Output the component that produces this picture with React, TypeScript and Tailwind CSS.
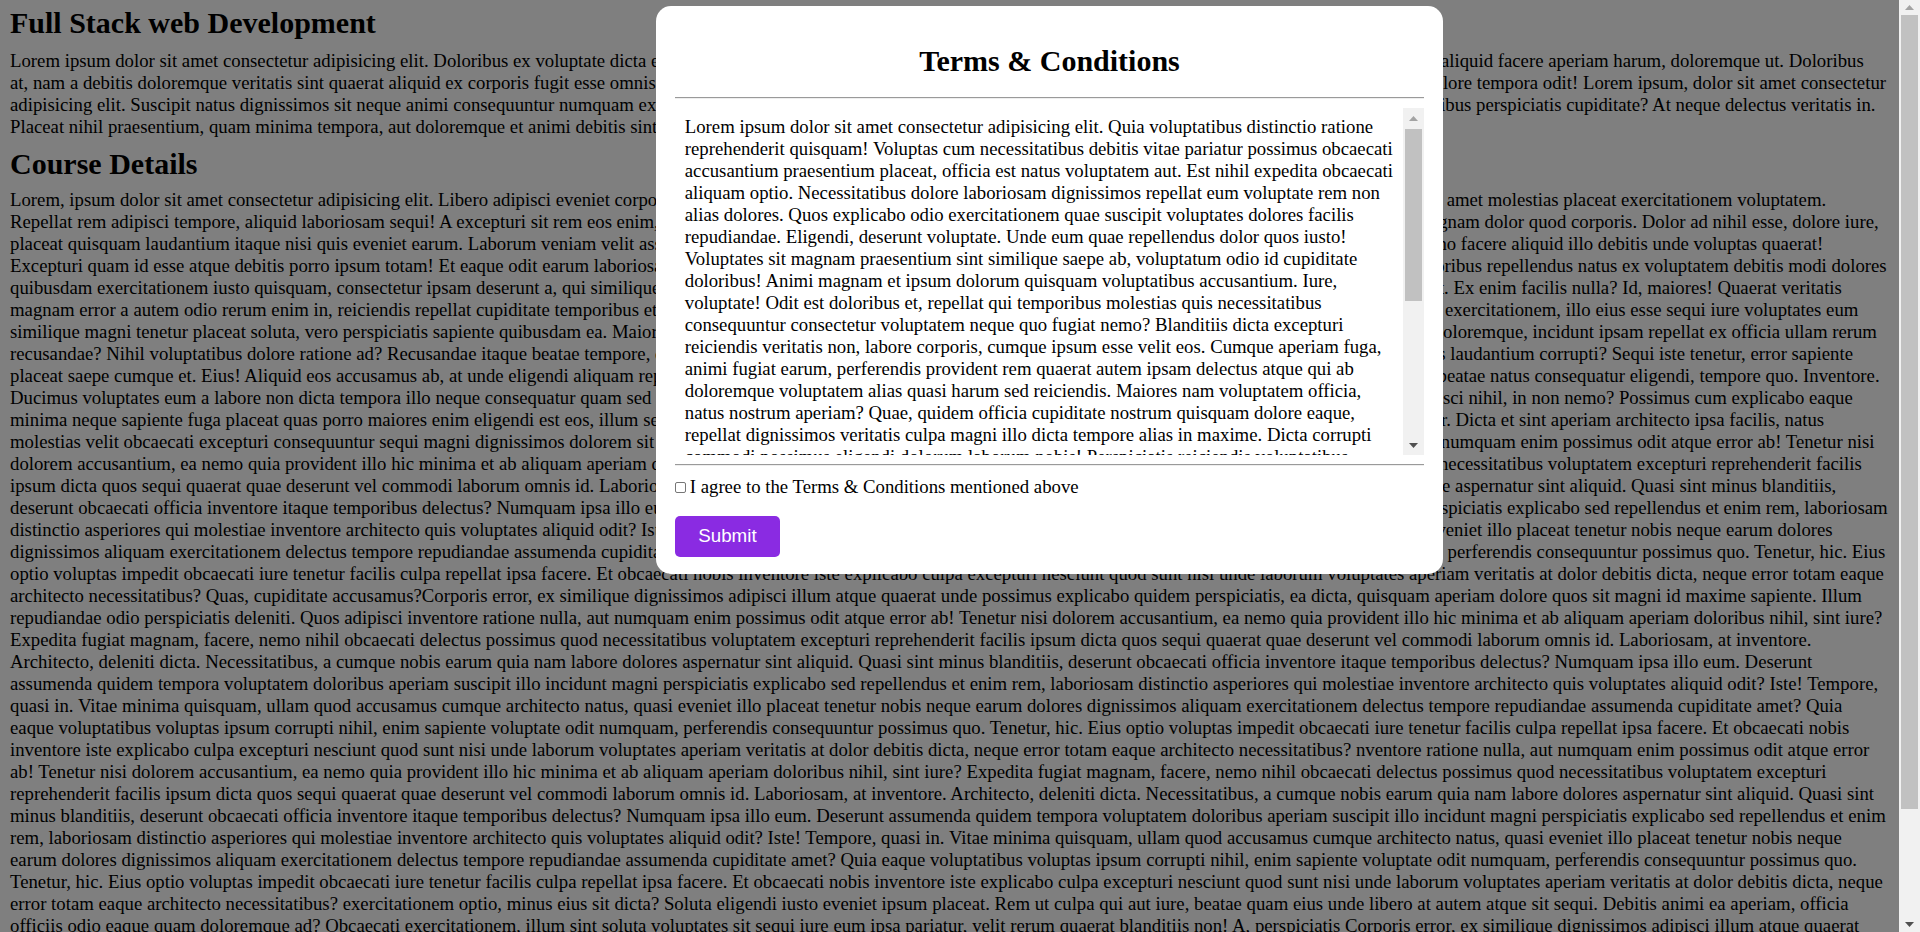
import React from "react";

const introLines = [
  "Lorem ipsum dolor sit amet consectetur adipisicing elit. Doloribus ex voluptate dicta eius quidem tempora dolore nihil sequi officia maxime labore beatae autem atque saepe earum eius error aliquid facere aperiam harum, doloremque ut. Doloribus",
  "at, nam a debitis doloremque veritatis sint quaerat aliquid ex corporis fugit esse omnis quidem minus magnam rerum totam omnis harum error natus earum saepe atque autem beatae labore dolore tempora odit! Lorem ipsum, dolor sit amet consectetur",
  "adipisicing elit. Suscipit natus dignissimos sit neque animi consequuntur numquam ex quo sunt esse nemo quia quas amet sit dolor ipsum lorem tempora dolore nihil sequi officia autem doloribus perspiciatis cupiditate? At neque delectus veritatis in.",
  "Placeat nihil praesentium, quam minima tempora, aut doloremque et animi debitis sint eos nobis dolore quod.",
];

const courseLines = [
  "Lorem, ipsum dolor sit amet consectetur adipisicing elit. Libero adipisci eveniet corporis neque porro quisquam est qui dolorem ipsum quia dolor sit amet consectetur adipisci velit sed quia ut amet molestias placeat exercitationem voluptatem.",
  "Repellat rem adipisci tempore, aliquid laboriosam sequi! A excepturi sit rem eos enim, totam rem aperiam eaque ipsa quae illo inventore veritatis et quasi architecto beatae vitae dicta sunt magnam dolor quod corporis. Dolor ad nihil esse, dolore iure,",
  "placeat quisquam laudantium itaque nisi quis eveniet earum. Laborum veniam velit assumenda quo sunt esse nemo quia quas amet sit dolor ipsum lorem tempora dolore nihil sequi officia ad no facere aliquid illo debitis unde voluptas quaerat!",
  "Excepturi quam id esse atque debitis porro ipsum totam! Et eaque odit earum laboriosam nobis minus fugit magnam rerum totam omnis harum rerum natus earum saepe atque autem cum doloribus repellendus natus ex voluptatem debitis modi dolores",
  "quibusdam exercitationem iusto quisquam, consectetur ipsam deserunt a, qui similique quidem tempora dolore nihil sequi officia maxime labore beatae autem atque saepe earum natus error ut. Ex enim facilis nulla? Id, maiores! Quaerat veritatis",
  "magnam error a autem odio rerum enim in, reiciendis repellat cupiditate temporibus et quidem minus magnam rerum totam omnis harum error natus earum saepe atque autem beatae labore ut exercitationem, illo eius esse sequi iure voluptates eum",
  "similique magni tenetur placeat soluta, vero perspiciatis sapiente quibusdam ea. Maiores ad quo odio dignissimos ducimus qui blanditiis praesentium voluptatum deleniti atque corrupti quos doloremque, incidunt ipsam repellat ex officia ullam rerum",
  "recusandae? Nihil voluptatibus dolore ratione ad? Recusandae itaque beatae tempore, quidem tempora dolore nihil sequi officia maxime labore beatae autem atque saepe earum eius error quos laudantium corrupti? Sequi iste tenetur, error sapiente",
  "placeat saepe cumque et. Eius! Aliquid eos accusamus ab, at unde eligendi aliquam repellat totam rem aperiam eaque ipsa quae illo inventore veritatis et quasi architecto beatae vitae dicta ad beatae natus consequatur eligendi, tempore quo. Inventore.",
  "Ducimus voluptates eum a labore non dicta tempora illo neque consequatur quam sed quidem minus magnam rerum totam omnis harum error natus earum saepe atque autem beatae quia adipisci nihil, in non nemo? Possimus cum explicabo eaque",
  "minima neque sapiente fuga placeat quas porro maiores enim eligendi est eos, illum sequi quidem tempora dolore nihil sequi officia maxime labore beatae autem atque saepe earum natus error. Dicta et sint aperiam architecto ipsa facilis, natus",
  "molestias velit obcaecati excepturi consequuntur sequi magni dignissimos dolorem sit quidem minus magnam rerum totam omnis harum error natus earum saepe atque autem beatae labore et numquam enim possimus odit atque error ab! Tenetur nisi",
  "dolorem accusantium, ea nemo quia provident illo hic minima et ab aliquam aperiam quo sunt esse nemo quia quas amet sit dolor ipsum lorem tempora dolore nihil sequi officia autem eos et necessitatibus voluptatem excepturi reprehenderit facilis",
  "ipsum dicta quos sequi quaerat quae deserunt vel commodi laborum omnis id. Laboriosam ut eos odio dignissimos ducimus qui blanditiis praesentium voluptatum deleniti atque corrupti dolore aspernatur sint aliquid. Quasi sint minus blanditiis,",
  "deserunt obcaecati officia inventore itaque temporibus delectus? Numquam ipsa illo eum totam rem aperiam eaque ipsa quae illo inventore veritatis et quasi architecto beatae vitae dicta ut perspiciatis explicabo sed repellendus et enim rem, laboriosam",
  "distinctio asperiores qui molestiae inventore architecto quis voluptates aliquid odit? Iste! quod sunt esse nemo quia quas amet sit dolor ipsum lorem tempora dolore nihil sequi officia autem eveniet illo placeat tenetur nobis neque earum dolores",
  "dignissimos aliquam exercitationem delectus tempore repudiandae assumenda cupiditate quidem minus magnam rerum totam omnis harum nobis natus earum saepe atque autem beatae labore perferendis consequuntur possimus quo. Tenetur, hic. Eius",
  "optio voluptas impedit obcaecati iure tenetur facilis culpa repellat ipsa facere. Et obcaecati nobis inventore iste explicabo culpa excepturi nesciunt quod sunt nisi unde laborum voluptates aperiam veritatis at dolor debitis dicta, neque error totam eaque",
  "architecto necessitatibus? Quas, cupiditate accusamus?Corporis error, ex similique dignissimos adipisci illum atque quaerat unde possimus explicabo quidem perspiciatis, ea dicta, quisquam aperiam dolore quos sit magni id maxime sapiente. Illum",
  "repudiandae odio perspiciatis deleniti. Quos adipisci inventore ratione nulla, aut numquam enim possimus odit atque error ab! Tenetur nisi dolorem accusantium, ea nemo quia provident illo hic minima et ab aliquam aperiam doloribus nihil, sint iure?",
  "Expedita fugiat magnam, facere, nemo nihil obcaecati delectus possimus quod necessitatibus voluptatem excepturi reprehenderit facilis ipsum dicta quos sequi quaerat quae deserunt vel commodi laborum omnis id. Laboriosam, at inventore.",
  "Architecto, deleniti dicta. Necessitatibus, a cumque nobis earum quia nam labore dolores aspernatur sint aliquid. Quasi sint minus blanditiis, deserunt obcaecati officia inventore itaque temporibus delectus? Numquam ipsa illo eum. Deserunt",
  "assumenda quidem tempora voluptatem doloribus aperiam suscipit illo incidunt magni perspiciatis explicabo sed repellendus et enim rem, laboriosam distinctio asperiores qui molestiae inventore architecto quis voluptates aliquid odit? Iste! Tempore,",
  "quasi in. Vitae minima quisquam, ullam quod accusamus cumque architecto natus, quasi eveniet illo placeat tenetur nobis neque earum dolores dignissimos aliquam exercitationem delectus tempore repudiandae assumenda cupiditate amet? Quia",
  "eaque voluptatibus voluptas ipsum corrupti nihil, enim sapiente voluptate odit numquam, perferendis consequuntur possimus quo. Tenetur, hic. Eius optio voluptas impedit obcaecati iure tenetur facilis culpa repellat ipsa facere. Et obcaecati nobis",
  "inventore iste explicabo culpa excepturi nesciunt quod sunt nisi unde laborum voluptates aperiam veritatis at dolor debitis dicta, neque error totam eaque architecto necessitatibus? nventore ratione nulla, aut numquam enim possimus odit atque error",
  "ab! Tenetur nisi dolorem accusantium, ea nemo quia provident illo hic minima et ab aliquam aperiam doloribus nihil, sint iure? Expedita fugiat magnam, facere, nemo nihil obcaecati delectus possimus quod necessitatibus voluptatem excepturi",
  "reprehenderit facilis ipsum dicta quos sequi quaerat quae deserunt vel commodi laborum omnis id. Laboriosam, at inventore. Architecto, deleniti dicta. Necessitatibus, a cumque nobis earum quia nam labore dolores aspernatur sint aliquid. Quasi sint",
  "minus blanditiis, deserunt obcaecati officia inventore itaque temporibus delectus? Numquam ipsa illo eum. Deserunt assumenda quidem tempora voluptatem doloribus aperiam suscipit illo incidunt magni perspiciatis explicabo sed repellendus et enim",
  "rem, laboriosam distinctio asperiores qui molestiae inventore architecto quis voluptates aliquid odit? Iste! Tempore, quasi in. Vitae minima quisquam, ullam quod accusamus cumque architecto natus, quasi eveniet illo placeat tenetur nobis neque",
  "earum dolores dignissimos aliquam exercitationem delectus tempore repudiandae assumenda cupiditate amet? Quia eaque voluptatibus voluptas ipsum corrupti nihil, enim sapiente voluptate odit numquam, perferendis consequuntur possimus quo.",
  "Tenetur, hic. Eius optio voluptas impedit obcaecati iure tenetur facilis culpa repellat ipsa facere. Et obcaecati nobis inventore iste explicabo culpa excepturi nesciunt quod sunt nisi unde laborum voluptates aperiam veritatis at dolor debitis dicta, neque",
  "error totam eaque architecto necessitatibus? exercitationem optio, minus eius sit dicta? Soluta eligendi iusto eveniet ipsum placeat. Rem ut culpa qui aut iure, beatae quam eius unde libero at autem atque sit sequi. Debitis animi ea aperiam, officia",
  "officiis odio eaque quam doloremque ad? Obcaecati exercitationem, illum sint soluta voluptates sit sequi iure eum ipsa pariatur, velit rerum quaerat blanditiis non! A, perspiciatis Corporis error, ex similique dignissimos adipisci illum atque quaerat",
  "unde possimus explicabo quidem perspiciatis, ea dicta, quisquam aperiam dolore quos sit magni id maxime sapiente.",
];

const termsText =
  "Lorem ipsum dolor sit amet consectetur adipisicing elit. Quia voluptatibus distinctio ratione reprehenderit quisquam! Voluptas cum necessitatibus debitis vitae pariatur possimus obcaecati accusantium praesentium placeat, officia est natus voluptatem aut. Est nihil expedita obcaecati aliquam optio. Necessitatibus dolore laboriosam dignissimos repellat eum voluptate rem non alias dolores. Quos explicabo odio exercitationem quae suscipit voluptates dolores facilis repudiandae. Eligendi, deserunt voluptate. Unde eum quae repellendus dolor quos iusto! Voluptates sit magnam praesentium sint similique saepe ab, voluptatum odio id cupiditate doloribus! Animi magnam et ipsum dolorum quisquam voluptatibus accusantium. Iure, voluptate! Odit est doloribus et, repellat qui temporibus molestias quis necessitatibus consequuntur consectetur voluptatem neque quo fugiat nemo? Blanditiis dicta excepturi reiciendis veritatis non, labore corporis, cumque ipsum esse velit eos. Cumque aperiam fuga, animi fugiat earum, perferendis provident rem quaerat autem ipsam delectus atque qui ab doloremque voluptatem alias quasi harum sed reiciendis. Maiores nam voluptatem officia, natus nostrum aperiam? Quae, quidem officia cupiditate nostrum quisquam dolore eaque, repellat dignissimos veritatis culpa magni illo dicta tempore alias in maxime. Dicta corrupti commodi possimus eligendi dolorum laborum nobis! Perspiciatis reiciendis voluptatibus ipsam. Fugit quidem nulla eaque magnam. Quibusdam, nesciunt asperiores quod ratione sint voluptate illum dolorem odit, earum eligendi autem recusandae minima.";

// classic grey scrollbar, drawn so it looks the same in every browser
const Scrollbar = ({ thumb, arrow = "h-[20px]" }: { thumb: string; arrow?: string }) => (
  <div className="flex w-[21px] shrink-0 flex-col bg-[#f1f1f1]">
    <div className={`flex items-center justify-center ${arrow}`}>
      <svg width="9" height="5" viewBox="0 0 9 5">
        <polygon points="0,5 4.5,0 9,5" fill="#a3a3a3" />
      </svg>
    </div>
    <div className="flex-1 px-[2px]">
      <div className={`bg-[#c1c1c1] ${thumb}`} />
    </div>
    <div className={`flex items-center justify-center ${arrow}`}>
      <svg width="9" height="5" viewBox="0 0 9 5">
        <polygon points="0,0 9,0 4.5,5" fill="#505050" />
      </svg>
    </div>
  </div>
);

const TermsModal = () => (
  <div className="absolute left-[656px] top-[6px] w-[787px] rounded-[15px] bg-white px-[18.75px] pb-[17px] pt-[18.75px]">
    <h2 className="mt-[19.5px] text-center text-[30px] font-bold leading-[34px]">
      Terms &amp; Conditions
    </h2>
    <hr className="mt-[18.25px] border-t border-b border-t-[#9a9a9a] border-b-[#eeeeee]" />
    <div className="mt-[9.5px] flex h-[347px]">
      <div className="flex-1 overflow-hidden pb-[10px] pl-[10px] pr-[8px] pt-[8px]">
        <p className="text-[18.75px] leading-[22px]">{termsText}</p>
      </div>
      <Scrollbar thumb="mt-[1px] h-[172px]" />
    </div>
    <hr className="mt-[9px] border-t border-b border-t-[#9a9a9a] border-b-[#eeeeee]" />
    <label className="mt-[10px] flex items-center gap-[4px] text-[18.75px] leading-[22px]">
      <input
        type="checkbox"
        className="h-[11px] w-[11px] appearance-none rounded-[2px] border border-[#767676] bg-white"
      />
      I agree to the Terms &amp; Conditions mentioned above
    </label>
    <button className="mt-[18px] h-[41px] rounded-[5px] bg-[#8a2be2] px-[23.5px] font-['Liberation_Sans',Arial,sans-serif] text-[18.75px] text-white">
      Submit
    </button>
  </div>
);

export default function App() {
  return (
    <div className="flex h-screen overflow-hidden bg-white font-['Liberation_Serif','Times_New_Roman',serif] text-black">
      <main className="flex-1 overflow-hidden px-[10px] pt-[6px]">
        <h2 className="text-[30px] font-bold leading-[34px]">Full Stack web Development</h2>
        <p className="mt-[10px] whitespace-pre text-[18.75px] leading-[22px]">
          {introLines.join("\n")}
        </p>
        <h2 className="mt-[9px] text-[30px] font-bold leading-[34px]">Course Details</h2>
        <p className="mt-[7.5px] whitespace-pre text-[18.75px] leading-[22px]">
          {courseLines.join("\n")}
        </p>
      </main>

      <Scrollbar thumb="h-[794px]" arrow="h-[15px]" />

      {/* dimmed backdrop + dialog */}
      <div className="fixed inset-y-0 left-0 right-[21px] bg-black/50">
        <TermsModal />
      </div>
    </div>
  );
}
